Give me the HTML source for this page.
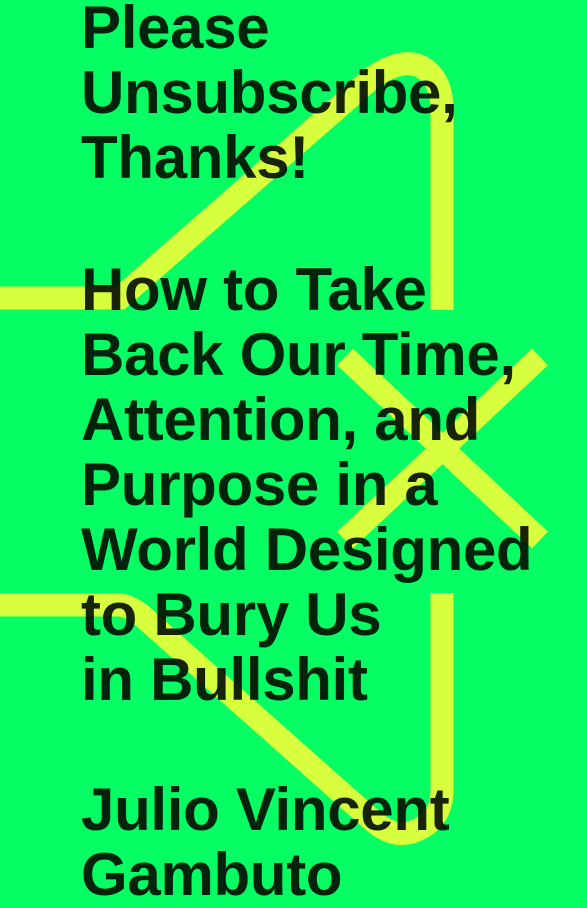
<!DOCTYPE html>
<html><head><meta charset="utf-8"><style>
html,body{margin:0;padding:0}
body{width:587px;height:900px;overflow:hidden;background:#06fd63;position:relative;font-family:"Liberation Sans",sans-serif}
svg{position:absolute;left:0;top:0}
.t{position:absolute;left:81px;font-weight:bold;font-size:60px;line-height:65px;letter-spacing:-0.3px;color:#1d231f;white-space:nowrap;mix-blend-mode:multiply}
</style></head><body>
<svg width="587" height="900" viewBox="0 0 587 900">
<g fill="none" stroke="#d8ff3e" stroke-width="23">
<path d="M0 298 H120 L372 78 Q400 58 420 66 Q442 78 442 110 V310"/>
<path d="M345 357 L540 540 M540 357 L345 540"/>
<path d="M0 605 H118 Q128 605 140 614 L372 820 Q392 838 412 832 Q442 822 442 790 V593"/>
</g>
</svg>
<div class="t" style="top:-5px">Please<br>Unsubscribe,<br>Thanks!</div>
<div class="t" style="top:257px">How to Take<br>Back Our Time,<br>Attention, and<br>Purpose in a<br>World Designed<br>to Bury Us<br>in Bullshit</div>
<div class="t" style="top:777px">Julio Vincent<br>Gambuto</div>
</body></html>
